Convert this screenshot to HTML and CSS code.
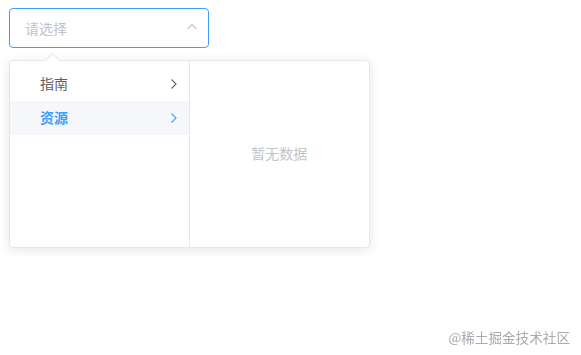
FILE: index.html
```html
<!DOCTYPE html>
<html>
<head>
	<title>Cascader</title>
	<link rel="stylesheet" href="styles.css">
</head>
<body>
	<div class="cascader">
		<div class="cascader-input">
			<span class="placeholder">请选择</span>
			<svg class="input-arrow" width="12" height="12" viewBox="0 0 12 12">
				<path d="M1.5 8 L6 3.5 L10.5 8" fill="none" stroke="#c0c4cc" stroke-width="1.2"/>
			</svg>
		</div>
		<div class="cascader-dropdown">
			<span class="popper-arrow"></span>
			<div class="menu">
				<div class="menu-item">
					<span>指南</span>
					<svg class="item-arrow" width="8" height="12" viewBox="0 0 8 12">
						<path d="M1.5 1.5 L6 6 L1.5 10.5" fill="none" stroke="#606266" stroke-width="1.1"/>
					</svg>
				</div>
				<div class="menu-item active">
					<span>资源</span>
					<svg class="item-arrow" width="8" height="12" viewBox="0 0 8 12">
						<path d="M1.5 1.5 L6 6 L1.5 10.5" fill="none" stroke="#409eff" stroke-width="1.1"/>
					</svg>
				</div>
			</div>
			<div class="menu empty">
				<span class="empty-text">暂无数据</span>
			</div>
		</div>
	</div>
	<div class="watermark">@稀土掘金技术社区</div>
</body>
</html>
```

FILE: styles.css
```css
body {
	margin: 0;
	padding: 8px 9px;
	font-family: "Noto Sans CJK SC", "Noto Sans", sans-serif;
	background: #fff;
}

.cascader {
	width: 362px;
}

.cascader-input {
	width: 200px;
	height: 40px;
	box-sizing: border-box;
	border: 1px solid #409eff;
	border-radius: 4px;
	display: flex;
	align-items: center;
	justify-content: space-between;
	padding: 0 10px 0 15px;
}

.placeholder {
	font-size: 14px;
	color: #c0c4cc;
}

.input-arrow {
	margin-top: -2px;
}

.cascader-dropdown {
	position: relative;
	margin-top: 12px;
	display: flex;
	width: 361px;
	height: 188px;
	box-sizing: border-box;
	border: 1px solid #e4e7ed;
	border-radius: 4px;
	background: #fff;
	box-shadow: 0 2px 12px 0 rgba(0, 0, 0, 0.1);
}

.popper-arrow {
	position: absolute;
	top: -6px;
	left: 37px;
	width: 10px;
	height: 10px;
	background: #fff;
	border-top: 1px solid #e4e7ed;
	border-left: 1px solid #e4e7ed;
	transform: rotate(45deg);
}

.menu {
	width: 180px;
	box-sizing: border-box;
	padding: 6px 0;
	border-right: 1px solid #e4e7ed;
}

.menu.empty {
	border-right: none;
	display: flex;
	align-items: center;
	justify-content: center;
}

.menu-item {
	height: 34px;
	display: flex;
	align-items: center;
	justify-content: space-between;
	padding: 0 11px 0 30px;
	font-size: 14px;
	color: #606266;
}

.menu-item span {
	margin-top: -2px;
}

.menu-item.active {
	background: #f5f7fa;
	color: #409eff;
	font-weight: bold;
}

.empty-text {
	font-size: 14px;
	color: #c0c4cc;
	margin-top: -2px;
}

.watermark {
	position: fixed;
	right: 11px;
	bottom: 9px;
	font-size: 13.6px;
	line-height: 18px;
	color: #a8abb2;
}
```
